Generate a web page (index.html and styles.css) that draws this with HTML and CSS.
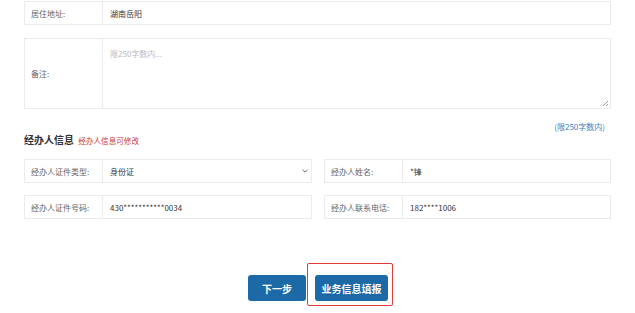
FILE: index.html
```html
<!DOCTYPE html>
<html lang="zh-CN">
<head>
    <meta charset="UTF-8">
    <title>业务信息填报</title>
    <link rel="stylesheet" href="styles.css">
</head>
<body>
    <div class="page">
        <div class="row">
            <div class="label">居住地址:</div>
            <div class="value">湖南岳阳</div>
        </div>

        <div class="row row-tall">
            <div class="label">备注:</div>
            <div class="value memo">
                <span class="placeholder">限250字数内...</span>
                <span class="grip"></span>
            </div>
        </div>

        <div class="limit">(限250字数内)</div>

        <h2 class="section-title">经办人信息 <span class="note">经办人信息可修改</span></h2>

        <div class="grid">
            <div class="row">
                <div class="label">经办人证件类型:</div>
                <div class="value select">
                    <span>身份证</span>
                    <svg class="chevron" width="6" height="4" viewBox="0 0 6 4"><path d="M0.5 0.8 L3 3.2 L5.5 0.8" fill="none" stroke="#555" stroke-width="0.9"/></svg>
                </div>
            </div>
            <div class="row">
                <div class="label">经办人姓名:</div>
                <div class="value">*锋</div>
            </div>
            <div class="row">
                <div class="label">经办人证件号码:</div>
                <div class="value">430***********0034</div>
            </div>
            <div class="row">
                <div class="label">经办人联系电话:</div>
                <div class="value">182****1006</div>
            </div>
        </div>

        <div class="actions">
            <button class="btn btn-next" type="button">下一步</button>
            <span class="highlight">
                <button class="btn" type="button">业务信息填报</button>
            </span>
        </div>
    </div>
</body>
</html>
```

FILE: styles.css
```css
body {
    margin: 0;
    background: #fff;
    font-family: "Noto Sans CJK SC", "Noto Sans", sans-serif;
    color: #333;
}

.page {
    width: 587px;
    padding: 1px 0 0 24px;
}

.row {
    display: flex;
    height: 24px;
    box-sizing: border-box;
    border: 1px solid #ebebeb;
    margin-bottom: 13px;
    font-size: 8px;
}

.label {
    width: 78px;
    flex: none;
    display: flex;
    align-items: center;
    padding-left: 6px;
    box-sizing: border-box;
    border-right: 1px solid #ebebeb;
    color: #666;
}

.value {
    flex: 1;
    display: flex;
    align-items: center;
    padding-left: 7px;
    color: #333;
}

.row-tall {
    height: 71px;
}

.memo {
    position: relative;
    align-items: flex-start;
    padding-top: 9px;
}

.placeholder {
    color: #bbb;
}

.grip {
    position: absolute;
    right: 2px;
    bottom: 2px;
    width: 5px;
    height: 5px;
    background: linear-gradient(135deg, transparent 45%, #999 45%, #999 55%, transparent 55%, transparent 70%, #999 70%, #999 80%, transparent 80%);
}

.limit {
    text-align: right;
    padding-right: 6px;
    font-size: 8px;
    line-height: 10px;
    color: #3b7cc0;
}

.section-title {
    margin: 1px 0 11px;
    font-size: 10px;
    line-height: 14px;
    font-weight: bold;
    color: #333;
}

.note {
    margin-left: 2px;
    font-size: 7.6px;
    font-weight: normal;
    color: #c8373b;
}

.grid {
    display: grid;
    grid-template-columns: 288px 287px;
    column-gap: 12px;
    row-gap: 12px;
}

.grid .row {
    margin-bottom: 0;
}

.select {
    justify-content: space-between;
    padding-right: 3px;
}

.chevron {
    display: block;
}

.actions {
    display: flex;
    justify-content: center;
    align-items: flex-start;
    margin-top: 44px;
    padding-left: 6px;
}

.btn {
    height: 26px;
    padding: 0 8px;
    border: none;
    border-radius: 3px;
    background: #1b6aa5;
    color: #fff;
    font-family: inherit;
    font-size: 10px;
    font-weight: bold;
    cursor: pointer;
}

.btn-next {
    width: 58px;
    margin-top: 12px;
    margin-right: 1px;
}

.highlight {
    display: block;
    padding: 11px 4px 4px 7px;
    border: 1px solid #e53935;
    border-radius: 2px;
}

.highlight .btn {
    display: block;
    width: 73px;
    padding: 0;
}
```
